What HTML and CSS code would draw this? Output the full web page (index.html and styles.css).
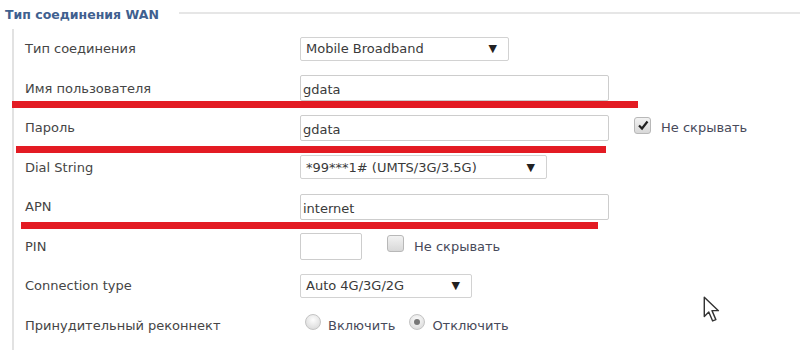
FILE: index.html
```html
<!DOCTYPE html>
<html lang="ru">
<head>
<meta charset="utf-8">
<link rel="stylesheet" href="styles.css">
</head>
<body>
<div class="page">
  <div class="legend">
    <span class="title">Тип соединения WAN</span>
    <span class="rule"></span>
  </div>
  <div class="fs">
    <div class="row">
      <div class="label">Тип соединения</div>
      <div class="field"><div class="select w-conn">Mobile Broadband<span class="arrow">▼</span></div></div>
    </div>
    <div class="row">
      <div class="label">Имя пользователя</div>
      <div class="field"><div class="input w-text">gdata</div></div>
    </div>
    <div class="row">
      <div class="label">Пароль</div>
      <div class="field">
        <div class="input w-text">gdata</div>
        <span class="check checked pw-check"><svg viewBox="0 0 12 12" width="12" height="12"><path d="M2 6.5 L5 9.5 L10.5 2.5" fill="none" stroke="#222" stroke-width="2.2"/></svg></span>
        <span class="opt">Не скрывать</span>
      </div>
    </div>
    <div class="row">
      <div class="label">Dial String</div>
      <div class="field"><div class="select w-dial">*99***1# (UMTS/3G/3.5G)<span class="arrow">▼</span></div></div>
    </div>
    <div class="row">
      <div class="label">APN</div>
      <div class="field"><div class="input w-text">internet</div></div>
    </div>
    <div class="row">
      <div class="label">PIN</div>
      <div class="field">
        <div class="input w-pin"></div>
        <span class="check pin-check"></span>
        <span class="opt">Не скрывать</span>
      </div>
    </div>
    <div class="row">
      <div class="label">Connection type</div>
      <div class="field"><div class="select w-type">Auto 4G/3G/2G<span class="arrow">▼</span></div></div>
    </div>
    <div class="row">
      <div class="label">Принудительный реконнект</div>
      <div class="field">
        <span class="radio r1"></span><span class="opt ropt">Включить</span>
        <span class="radio checked r2"></span><span class="opt ropt">Отключить</span>
      </div>
    </div>
  </div>

  <div class="mark m1"></div>
  <div class="mark m2"></div>
  <div class="mark m3"></div>

  <svg class="cursor" viewBox="0 0 14 22" width="18" height="32">
    <path d="M1 1 L1 16 L4.5 12.5 L7.5 19.5 L10 18.5 L7 11.5 L12 11.5 Z" fill="#fff" stroke="#333" stroke-width="1.1" stroke-linejoin="round"/>
  </svg>
</div>
</body>
</html>
```

FILE: styles.css
```css
html, body {
  margin: 0;
  padding: 0;
  background: #fff;
}
.page {
  position: relative;
  width: 800px;
  height: 350px;
  overflow: hidden;
  font-family: "DejaVu Sans", "Liberation Sans", sans-serif;
  font-size: 13px;
  color: #454545;
}
.legend {
  height: 29px;
  display: flex;
  align-items: center;
  padding-left: 5px;
}
.title {
  font-weight: bold;
  color: #40608f;
  font-size: 12.5px;
  margin-top: -1px;
}
.rule {
  flex: 1;
  margin-left: 20px;
  border-top: 2px solid #e6e6e6;
  margin-top: -3px;
}
.fs {
  margin-left: 12px;
  border-left: 2px solid #e2e2e2;
  padding-left: 10px;
  height: 330px;
}
.row {
  height: 39.5px;
  display: grid;
  grid-template-columns: 276px 1fr;
  align-items: center;
}
.label {
  white-space: nowrap;
  margin-left: 1px;
}
.field {
  display: flex;
  align-items: center;
}
.input, .select {
  box-sizing: border-box;
  border: 1.5px solid #cdcdcd;
  border-radius: 2px;
  background: #fff;
  color: #3a3a3a;
  display: flex;
  align-items: center;
  white-space: nowrap;
}
.input {
  height: 26px;
  padding-left: 2px;
  padding-top: 3px;
}
.select {
  height: 24px;
  justify-content: space-between;
  padding-left: 5px;
  padding-right: 11px;
  border-color: #d2d2d2;
}
.arrow {
  font-size: 11px;
  color: #222;
}
.w-conn { width: 209px; }
.w-dial { width: 247px; }
.w-type { width: 172px; }
.w-text { width: 309px; }
.w-pin { width: 62px; height: 27px; }
.check {
  box-sizing: border-box;
  width: 17px;
  height: 17px;
  border: 1px solid #b8b8b8;
  border-radius: 3px;
  background: linear-gradient(#f2f2f2, #d8d8d8);
  display: flex;
  align-items: center;
  justify-content: center;
}
.pw-check { margin-left: 25px; margin-top: -5px; }
.pin-check { margin-left: 25px; margin-top: -5px; }
.opt {
  margin-left: 10px;
  color: #474a5a;
}
.radio {
  box-sizing: border-box;
  width: 16px;
  height: 16px;
  border-radius: 50%;
  border: 1px solid #c4c4c4;
  background: radial-gradient(circle at 50% 35%, #fdfdfd, #d4d4d4);
  position: relative;
}
.radio.checked::after {
  content: "";
  position: absolute;
  left: 4px;
  top: 4px;
  width: 6px;
  height: 6px;
  border-radius: 50%;
  background: #777;
}
.r1 { margin-left: 5px; margin-top: -6px; }
.r2 { margin-left: 14px; margin-top: -6px; }
.ropt { margin-left: 7px; }
.mark {
  position: absolute;
  height: 7px;
  background: #e31b23;
}
.m1 { left: 12px; top: 101px; width: 626px; }
.m2 { left: 16px; top: 146px; width: 590px; }
.m3 { left: 21px; top: 222px; width: 577px; }
.cursor {
  position: absolute;
  left: 703px;
  top: 294px;
}
```
